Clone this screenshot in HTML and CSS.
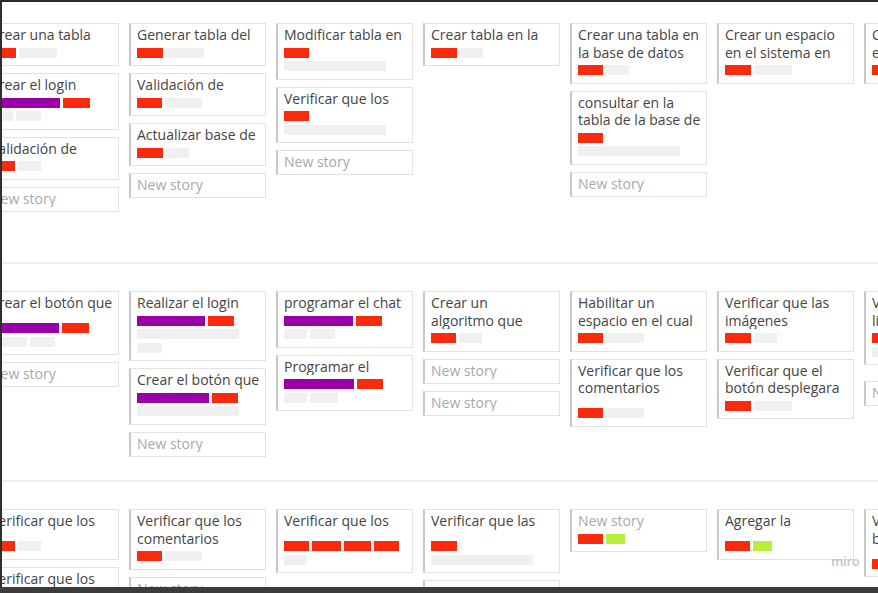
FILE: index.html
```html
<!DOCTYPE html>
<html lang="es">
<head>
<meta charset="utf-8">
<title>Story map</title>
<link rel="stylesheet" href="styles.css">
</head>
<body>
<div class="screen">
  <div class="frame">
    <div class="board">
      <section class="lane lane--one">
        <div class="col">
          <div class="card"><div class="card-title">Crear una tabla</div><div class="tags"><div class="tag-row"><span class="tag red w26"></span><span class="tag gray w38"></span></div></div></div>
          <div class="card"><div class="card-title">Crear el login</div><div class="tags"><div class="tag-row"><span class="tag purple w70"></span><span class="tag red w27"></span></div><div class="tag-row"><span class="tag gray w23"></span><span class="tag gray w25"></span></div></div></div>
          <div class="card"><div class="card-title">Validación de</div><div class="tags"><div class="tag-row"><span class="tag red w25"></span><span class="tag gray w23"></span></div></div></div>
          <div class="card card--new"><div class="card-title">New story</div></div>
        </div>
        <div class="col">
          <div class="card"><div class="card-title">Generar tabla del</div><div class="tags"><div class="tag-row"><span class="tag red w26"></span><span class="tag gray w38"></span></div></div></div>
          <div class="card"><div class="card-title">Validación de</div><div class="tags"><div class="tag-row"><span class="tag red w25"></span><span class="tag gray w37"></span></div></div></div>
          <div class="card"><div class="card-title">Actualizar base de</div><div class="tags"><div class="tag-row"><span class="tag red w26"></span><span class="tag gray w23"></span></div></div></div>
          <div class="card card--new"><div class="card-title">New story</div></div>
        </div>
        <div class="col">
          <div class="card"><div class="card-title">Modificar tabla en</div><div class="tags"><div class="tag-row"><span class="tag red w25"></span></div><div class="tag-row"><span class="tag gray w102"></span></div></div></div>
          <div class="card"><div class="card-title">Verificar que los</div><div class="tags"><div class="tag-row"><span class="tag red w25"></span></div><div class="tag-row"><span class="tag gray w102"></span></div></div></div>
          <div class="card card--new"><div class="card-title">New story</div></div>
        </div>
        <div class="col">
          <div class="card"><div class="card-title">Crear tabla en la</div><div class="tags"><div class="tag-row"><span class="tag red w26"></span><span class="tag gray w23"></span></div></div></div>
        </div>
        <div class="col">
          <div class="card"><div class="card-title">Crear una tabla en<br>la base de datos</div><div class="tags"><div class="tag-row"><span class="tag red w25"></span><span class="tag gray w23"></span></div></div></div>
          <div class="card"><div class="card-title">consultar en la<br>tabla de la base de</div><div class="tags"><div class="tag-row"><span class="tag red w25"></span></div><div class="tag-row"><span class="tag gray w102"></span></div></div></div>
          <div class="card card--new"><div class="card-title">New story</div></div>
        </div>
        <div class="col">
          <div class="card"><div class="card-title">Crear un espacio<br>en el sistema en</div><div class="tags"><div class="tag-row"><span class="tag red w26"></span><span class="tag gray w38"></span></div></div></div>
        </div>
        <div class="col">
          <div class="card"><div class="card-title">Crear un enlace<br>en el menú</div><div class="tags"><div class="tag-row"><span class="tag red w26"></span><span class="tag gray w38"></span></div></div></div>
        </div>
      </section>

      <section class="lane lane--two">
        <div class="col">
          <div class="card card--gap"><div class="card-title">Crear el botón que</div><div class="tags"><div class="tag-row"><span class="tag purple w69"></span><span class="tag red w27"></span></div><div class="tag-row"><span class="tag gray w37"></span><span class="tag gray w25"></span></div></div></div>
          <div class="card card--new"><div class="card-title">New story</div></div>
        </div>
        <div class="col">
          <div class="card"><div class="card-title">Realizar el login</div><div class="tags"><div class="tag-row"><span class="tag purple w68"></span><span class="tag red w26"></span></div><div class="tag-row"><span class="tag gray w102"></span></div><div class="tag-row"><span class="tag gray w25"></span></div></div></div>
          <div class="card"><div class="card-title">Crear el botón que</div><div class="tags"><div class="tag-row"><span class="tag purple w72"></span><span class="tag red w26"></span></div><div class="tag-row"><span class="tag gray w102"></span></div></div></div>
          <div class="card card--new"><div class="card-title">New story</div></div>
        </div>
        <div class="col">
          <div class="card"><div class="card-title">programar el chat</div><div class="tags"><div class="tag-row"><span class="tag purple w69"></span><span class="tag red w26"></span></div><div class="tag-row"><span class="tag gray w23"></span><span class="tag gray w25"></span></div></div></div>
          <div class="card"><div class="card-title">Programar el</div><div class="tags"><div class="tag-row"><span class="tag purple w70"></span><span class="tag red w26"></span></div><div class="tag-row"><span class="tag gray w23"></span><span class="tag gray w28"></span></div></div></div>
        </div>
        <div class="col">
          <div class="card"><div class="card-title">Crear un<br>algoritmo que</div><div class="tags"><div class="tag-row"><span class="tag red w25"></span><span class="tag gray w23"></span></div></div></div>
          <div class="card card--new"><div class="card-title">New story</div></div>
          <div class="card card--new"><div class="card-title">New story</div></div>
        </div>
        <div class="col">
          <div class="card"><div class="card-title">Habilitar un<br>espacio en el cual</div><div class="tags"><div class="tag-row"><span class="tag red w25"></span><span class="tag gray w38"></span></div></div></div>
          <div class="card card--gap"><div class="card-title">Verificar que los<br>comentarios</div><div class="tags"><div class="tag-row"><span class="tag red w25"></span><span class="tag gray w38"></span></div></div></div>
        </div>
        <div class="col">
          <div class="card"><div class="card-title">Verificar que las<br>imágenes</div><div class="tags"><div class="tag-row"><span class="tag red w26"></span><span class="tag gray w23"></span></div></div></div>
          <div class="card"><div class="card-title">Verificar que el<br>botón desplegara</div><div class="tags"><div class="tag-row"><span class="tag red w26"></span><span class="tag gray w38"></span></div></div></div>
        </div>
        <div class="col">
          <div class="card"><div class="card-title">Verificar que la<br>lista de</div><div class="tags"><div class="tag-row"><span class="tag red w26"></span></div><div class="tag-row"><span class="tag gray w102"></span></div></div></div>
          <div class="card card--new card--push"><div class="card-title">New story</div></div>
        </div>
      </section>

      <section class="lane lane--three">
        <div class="col">
          <div class="card card--gap"><div class="card-title">Verificar que los</div><div class="tags"><div class="tag-row"><span class="tag red w25"></span><span class="tag gray w23"></span></div></div></div>
          <div class="card"><div class="card-title">Verificar que los</div><div class="tags"><div class="tag-row"><span class="tag red w25"></span></div></div></div>
        </div>
        <div class="col">
          <div class="card"><div class="card-title">Verificar que los<br>comentarios</div><div class="tags"><div class="tag-row"><span class="tag red w25"></span><span class="tag gray w37"></span></div></div></div>
          <div class="card card--new"><div class="card-title">New story</div></div>
        </div>
        <div class="col">
          <div class="card card--gap"><div class="card-title">Verificar que los</div><div class="tags"><div class="tag-row"><span class="tag red w25"></span><span class="tag red w29"></span><span class="tag red w27"></span><span class="tag red w25"></span></div><div class="tag-row"><span class="tag gray w23"></span></div></div></div>
        </div>
        <div class="col">
          <div class="card card--gap"><div class="card-title">Verificar que las</div><div class="tags"><div class="tag-row"><span class="tag red w26"></span></div><div class="tag-row"><span class="tag gray w102"></span></div></div></div>
          <div class="card card--new"><div class="card-title">New story</div></div>
        </div>
        <div class="col">
          <div class="card card--muted"><div class="card-title">New story</div><div class="tags"><div class="tag-row"><span class="tag red w25"></span><span class="tag green w19"></span></div></div></div>
        </div>
        <div class="col">
          <div class="card card--gap"><div class="card-title">Agregar la</div><div class="tags"><div class="tag-row"><span class="tag red w25"></span><span class="tag green w19"></span></div></div></div>
        </div>
        <div class="col">
          <div class="card card--gap"><div class="card-title">Verificar que el<br>botón</div><div class="tags"><div class="tag-row"><span class="tag red w25"></span><span class="tag gray w38"></span></div></div></div>
        </div>
      </section>
    </div>
    <div class="watermark">miro</div>
  </div>
  <div class="statusbar"></div>
</div>
</body>
</html>
```

FILE: styles.css
```css
* {
  box-sizing: border-box;
}

html,
body {
  margin: 0;
  padding: 0;
  height: 100%;
}

body {
  background: #ffffff;
  font-family: "Open Sans", "Noto Sans", sans-serif;
  color: #444444;
  overflow: hidden;
}

.screen {
  height: 593px;
  display: flex;
  flex-direction: column;
}

.frame {
  flex: 1;
  min-height: 0;
  position: relative;
  overflow: hidden;
  border-top: 2px solid #2a2a2a;
  border-left: 2px solid #2f2f2f;
  background: #ffffff;
}

.statusbar {
  height: 6px;
  flex: none;
  background: #3c3c3c;
}

.board {
  margin-left: -20px;
}

.lane {
  display: grid;
  grid-template-columns: repeat(7, 137px);
  column-gap: 10px;
  align-items: start;
  overflow: hidden;
  border-bottom: 2px solid #efefef;
}

.lane--one {
  height: 262px;
  padding-top: 21px;
}

.lane--two {
  height: 218px;
  padding-top: 27px;
}

.lane--three {
  height: 200px;
  padding-top: 27px;
  border-bottom: none;
}

.col {
  display: flex;
  flex-direction: column;
  gap: 7px;
}

.card {
  background: #ffffff;
  border: 1px solid #e2e2e2;
  border-left: 2px solid #c8c8c8;
  padding: 2px 6px 7.5px 6px;
}

.card-title {
  font-size: 14px;
  line-height: 17.5px;
  white-space: nowrap;
  overflow: hidden;
}

.card--new {
  padding-bottom: 3.5px;
}

.card--new .card-title,
.card--muted .card-title {
  color: #a9a9a9;
}

.card--push {
  margin-top: 9px;
}

.tags {
  display: flex;
  flex-direction: column;
  gap: 3.5px;
  margin-top: 4px;
}

.card--gap .tags {
  margin-top: 11.5px;
}

.tag-row {
  display: flex;
  gap: 3px;
}

.tag {
  display: block;
  height: 10px;
  flex: none;
}

.red {
  background: #fb2a0c;
}

.purple {
  background: #9a00a7;
}

.green {
  background: #b6f03a;
}

.gray {
  background: #f0f0f0;
}

.w19 { width: 19px; }
.w23 { width: 23px; }
.w25 { width: 25px; }
.w26 { width: 26px; }
.w27 { width: 27px; }
.w28 { width: 28px; }
.w29 { width: 29px; }
.w37 { width: 37px; }
.w38 { width: 38px; }
.w68 { width: 68px; }
.w69 { width: 69px; }
.w70 { width: 70px; }
.w72 { width: 72px; }
.w102 { width: 102px; }

.watermark {
  position: absolute;
  left: 829px;
  top: 551px;
  font-size: 13px;
  line-height: 16px;
  font-weight: 600;
  letter-spacing: -0.3px;
  color: #c4c4c4;
}
```
